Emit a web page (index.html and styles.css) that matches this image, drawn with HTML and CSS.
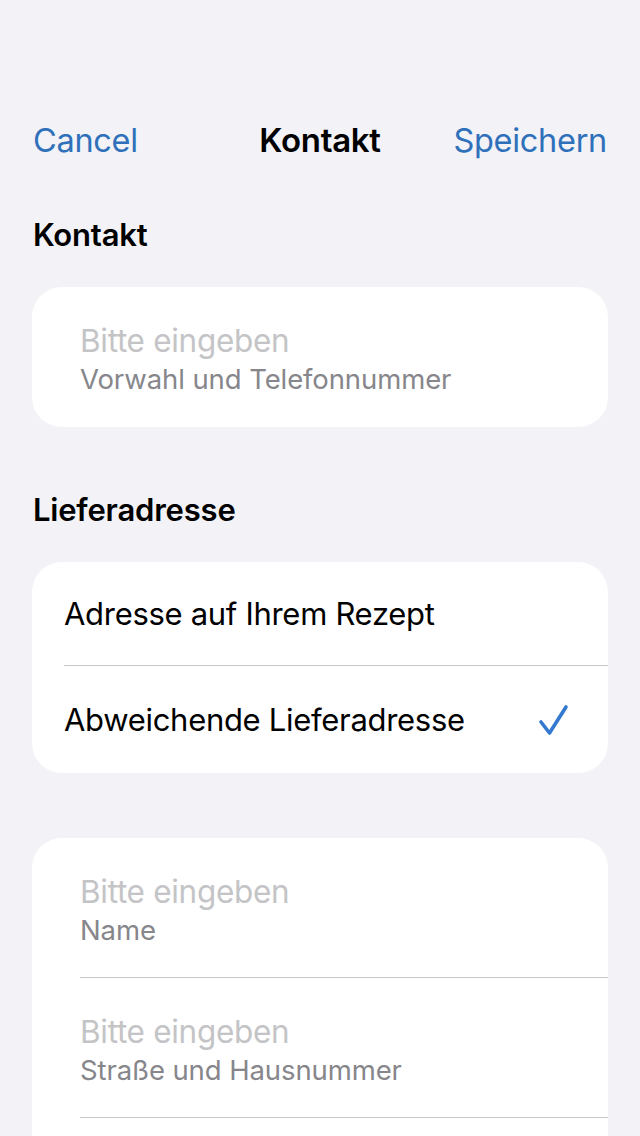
FILE: index.html
```html
<!DOCTYPE html>
<html lang="de">
<head>
<meta charset="utf-8">
<title>Kontakt</title>
<link rel="stylesheet" href="styles.css">
</head>
<body>
<div class="screen">
  <header class="nav">
    <span class="nav-btn left">Cancel</span>
    <span class="nav-title">Kontakt</span>
    <span class="nav-btn right">Speichern</span>
  </header>

  <h2 class="section-title">Kontakt</h2>
  <div class="card">
    <div class="field">
      <div class="placeholder">Bitte eingeben</div>
      <div class="label">Vorwahl und Telefonnummer</div>
    </div>
  </div>

  <h2 class="section-title second">Lieferadresse</h2>
  <div class="card">
    <div class="option first">
      <span>Adresse auf Ihrem Rezept</span>
    </div>
    <div class="option second-opt">
      <span>Abweichende Lieferadresse</span>
      <svg class="check" width="32" height="32" viewBox="0 0 32 32" aria-hidden="true">
        <path d="M4 18 L12.5 29 L29 3" fill="none" stroke="#3479d0" stroke-width="3.6" stroke-linecap="round" stroke-linejoin="round"/>
      </svg>
    </div>
  </div>

  <div class="card address">
    <div class="field">
      <div class="placeholder">Bitte eingeben</div>
      <div class="label">Name</div>
    </div>
    <div class="field">
      <div class="placeholder">Bitte eingeben</div>
      <div class="label">Straße und Hausnummer</div>
    </div>
  </div>
</div>
</body>
</html>
```

FILE: styles.css
```css
html, body {
  margin: 0;
  padding: 0;
  background: #f2f2f7;
}

body {
  font-family: "Inter", "Roboto", "Liberation Sans", sans-serif;
  color: #000;
  height: 1136px;
  overflow: hidden;
}

.screen {
  display: flex;
  flex-direction: column;
}

.nav {
  display: grid;
  grid-template-columns: 1fr auto 1fr;
  align-items: center;
  height: 60px;
  margin-top: 110px;
  padding: 0 33px;
}

.nav-btn {
  color: #2f70bb;
  font-size: 32.5px;
  letter-spacing: -0.3px;
}

.nav-btn.right {
  justify-self: end;
}

.nav-title {
  font-size: 33px;
  font-weight: 600;
  letter-spacing: -0.3px;
}

.section-title {
  margin: 47px 0 0 33px;
  font-size: 31px;
  font-weight: 600;
  line-height: 36px;
  letter-spacing: -0.2px;
}

.section-title.second {
  margin-top: 65px;
}

.card {
  margin: 34px 32px 0;
  background: #fff;
  border-radius: 30px;
  overflow: hidden;
}

.card.address {
  margin-top: 65px;
  padding-bottom: 60px;
  border-radius: 30px 30px 0 0;
}

.field {
  height: 140px;
  margin-left: 48px;
  display: flex;
  flex-direction: column;
  justify-content: center;
  box-sizing: border-box;
  padding-top: 4px;
}

.card.address .field {
  border-bottom: 1px solid #c8c8cc;
}

.placeholder {
  color: #c4c4c6;
  font-size: 31.5px;
  line-height: 40px;
  letter-spacing: -0.3px;
}

.label {
  color: #86868b;
  font-size: 27.5px;
  line-height: 36px;
  letter-spacing: -0.1px;
}

.option {
  display: flex;
  align-items: center;
  justify-content: space-between;
  margin-left: 32px;
  padding-right: 39px;
  font-size: 31px;
  letter-spacing: -0.3px;
  box-sizing: border-box;
}

.option.first {
  height: 104px;
  border-bottom: 1px solid #c8c8cc;
}

.option.second-opt {
  height: 107px;
}

.check {
  display: block;
}
```
